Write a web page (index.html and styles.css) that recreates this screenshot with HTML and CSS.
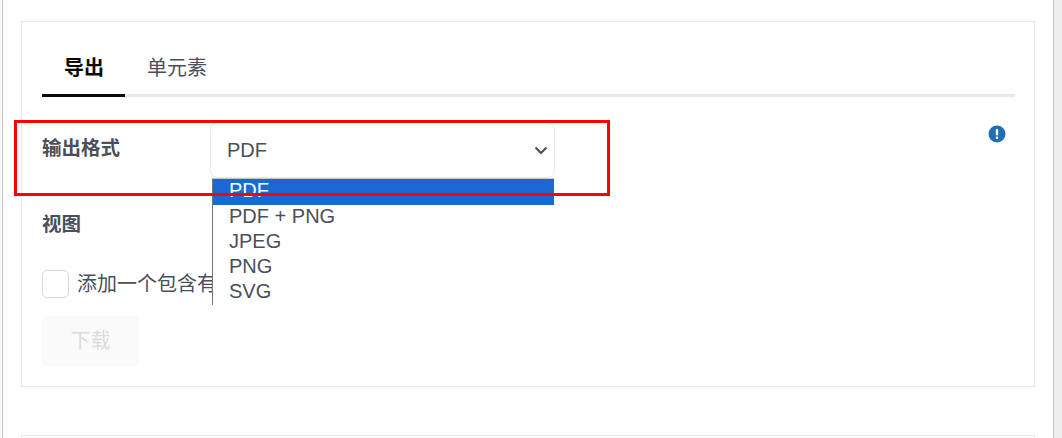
FILE: index.html
```html
<!DOCTYPE html>
<html lang="zh">
    <head>
        <meta charset="UTF-8">
        <title>导出</title>
        <link rel="stylesheet" href="styles.css">
    </head>
    <body>
        <div class="page">
            <div class="panel">
                <div class="card">
                    <div class="tabs">
                        <div class="tab active">导出</div>
                        <div class="tab">单元素</div>
                    </div>
                    <div class="row format-row">
                        <label class="row-label">输出格式</label>
                        <div class="select-wrap">
                            <div class="select">
                                <span>PDF</span>
                                <svg class="chevron" width="14" height="9" viewBox="0 0 14 9">
                                    <path d="M1.5 1.5 L7 7 L12.5 1.5" fill="none" stroke="#4a4f5a" stroke-width="2"/>
                                </svg>
                            </div>
                            <ul class="options">
                                <li class="selected">PDF</li>
                                <li>PDF + PNG</li>
                                <li>JPEG</li>
                                <li>PNG</li>
                                <li>SVG</li>
                            </ul>
                        </div>
                        <svg class="info" width="18" height="18" viewBox="0 0 18 18">
                            <circle cx="9" cy="9" r="8.5" fill="#1f6fb2"/>
                            <rect x="7.8" y="4" width="2.4" height="6.5" rx="1" fill="#fff"/>
                            <rect x="7.8" y="11.6" width="2.4" height="2.4" rx="1" fill="#fff"/>
                        </svg>
                    </div>
                    <div class="row-label view-label">视图</div>
                    <div class="check-row">
                        <span class="checkbox"></span>
                        <span class="check-text">添加一个包含有</span>
                    </div>
                    <button type="button" class="download" disabled>下载</button>
                </div>
                <div class="card next"></div>
            </div>
            <div class="gutter"></div>
            <div class="highlight"></div>
        </div>
    </body>
</html>
```

FILE: styles.css
```css
* {
    margin: 0;
    padding: 0;
    box-sizing: border-box;
}

body {
    font-family: "Liberation Sans", "Noto Sans CJK SC", sans-serif;
    font-size: 20px;
    color: #4a4f5a;
}

.page {
    position: relative;
    display: flex;
    height: 438px;
    overflow: hidden;
    padding-left: 2px;
    background: #fafafa;
}

.panel {
    flex: 1;
    padding: 21px 18px 0 18px;
    background: #fff;
    border-left: 1px solid #c4c4c4;
    border-right: 1px solid #c4c4c4;
}

.gutter {
    width: 8px;
    background: #eee;
}

.card {
    height: 366px;
    padding: 20px 19px 0 20px;
    border: 1px solid #e9e9ee;
}

.card.next {
    margin-top: 48px;
}

/* tabs */
.tabs {
    display: flex;
    height: 55px;
    border-bottom: 3px solid #e8e8ec;
}

.tab {
    height: 55px;
    padding: 12px 21px 0 22px;
    line-height: 28px;
}

.tab.active {
    font-weight: bold;
    color: #0a0a0a;
    border-bottom: 3px solid #0a0a0a;
}

/* form */
.row {
    display: flex;
}

.format-row {
    height: 81px;
    padding-top: 25px;
}

.row-label {
    display: block;
    font-size: 19.5px;
    font-weight: bold;
    line-height: 28px;
}

.format-row .row-label {
    width: 168px;
    margin-top: 12px;
}

.select-wrap {
    position: relative;
    width: 345px;
}

.select {
    display: flex;
    align-items: center;
    justify-content: space-between;
    height: 56px;
    padding: 0 6px 0 16px;
    border: 1px solid #e9e9ee;
    border-radius: 8px;
}

.options {
    position: absolute;
    top: 56px;
    left: 2px;
    width: 342px;
    height: 127px;
    padding-top: 1px;
    overflow: hidden;
    list-style: none;
    background: #fff;
    border-top: 1px solid #c8c8c8;
    border-left: 1px solid #767676;
}

.options li {
    height: 25px;
    padding-left: 16px;
    line-height: 23px;
}

.options li.selected {
    margin-top: -1px;
    height: 26px;
    line-height: 22px;
    color: #fff;
    background: #1a68d4;
}

.info {
    margin: 3px 0 0 433px;
}

.view-label {
    margin-top: 32px;
}

.check-row {
    display: flex;
    align-items: center;
    gap: 8px;
    margin-top: 32px;
    height: 28px;
}

.checkbox {
    width: 27px;
    height: 28px;
    border: 1px solid #dcdcdc;
    border-radius: 5px;
}

/* cut off where the open list starts */
.check-text {
    width: 135px;
    padding-bottom: 4px;
    overflow: hidden;
    white-space: nowrap;
}

.download {
    display: block;
    width: 97px;
    height: 50px;
    margin-top: 18px;
    padding-bottom: 4px;
    border: 0;
    border-radius: 5px;
    font: inherit;
    color: #dcdcdc;
    background: #fafafa;
}

/* red annotation drawn over the screenshot */
.highlight {
    position: absolute;
    top: 120px;
    left: 14px;
    width: 596px;
    height: 76px;
    border: 3px solid #f00;
}
```
